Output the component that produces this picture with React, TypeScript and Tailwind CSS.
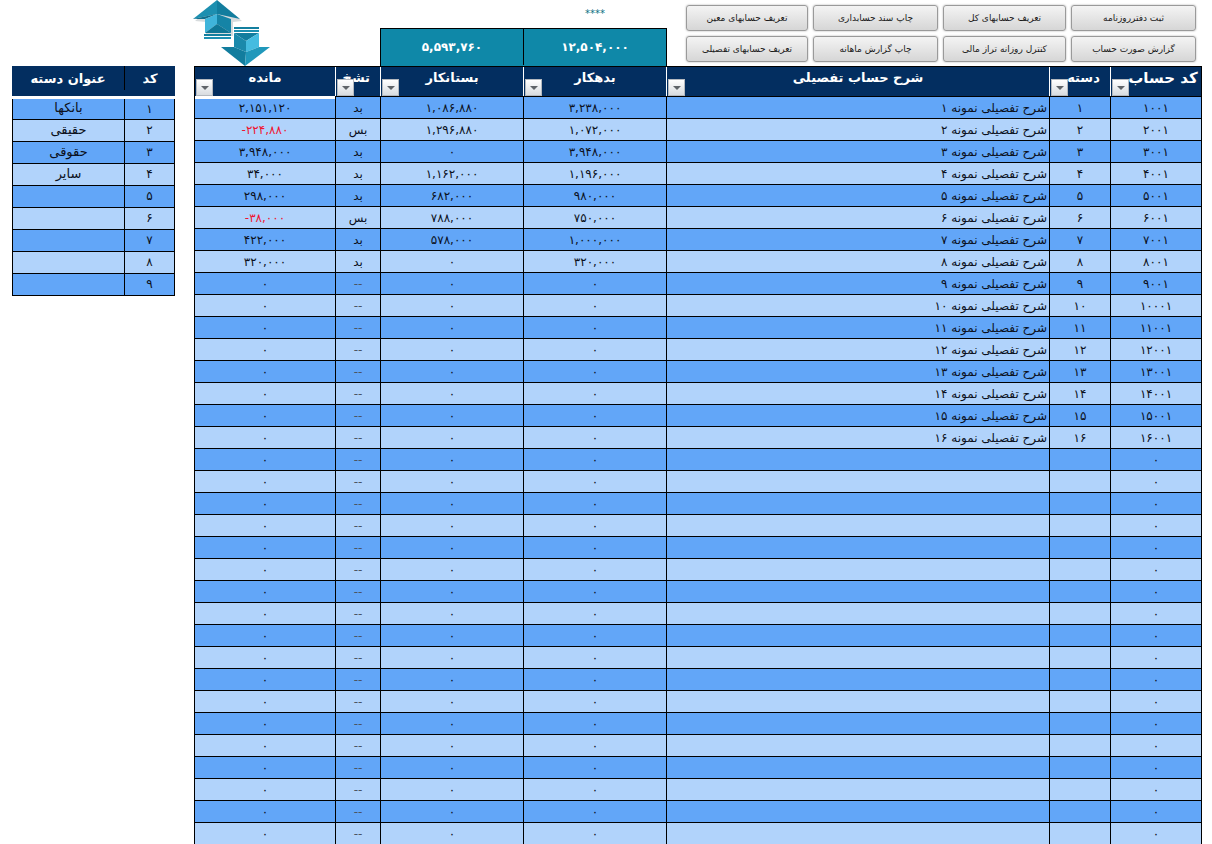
const toFa = (s: string) => s.replace(/\d/g, (d) => '۰۱۲۳۴۵۶۷۸۹'[Number(d)]);

const cols = ['w-[141px]', 'w-[45px]', 'w-[143px]', 'w-[143px]', 'w-[383px]', 'w-[61px]', 'w-[91px]'];

const titles = ['مانده', 'تشخ', 'بستانکار', 'بدهکار', 'شرح حساب تفصیلی', 'دسته', 'کد حساب'];

// each header label sits a little off centre in the sheet
const titleClass = ['', 'absolute right-[10px]', '', '', '', 'pl-[7px]', 'pl-[14px] text-[15px]'];

const filled = [
  ['3,238,000', '1,086,880', 'بد', '2,151,120'],
  ['1,072,000', '1,296,880', 'بس', '-224,880'],
  ['3,948,000', '0', 'بد', '3,948,000'],
  ['1,196,000', '1,162,000', 'بد', '34,000'],
  ['980,000', '682,000', 'بد', '298,000'],
  ['750,000', '788,000', 'بس', '-38,000'],
  ['1,000,000', '578,000', 'بد', '422,000'],
  ['320,000', '0', 'بد', '320,000'],
];

const groups = ['بانکها', 'حقیقی', 'حقوقی', 'سایر', '', '', '', '', ''];

const topButtons = [
  ['تعریف حسابهای معین', 'چاپ سند حسابداری', 'تعریف حسابهای کل', 'ثبت دفترروزنامه'],
  ['تعریف حسابهای تفصیلی', 'چاپ گزارش ماهانه', 'کنترل روزانه تراز مالی', 'گزارش صورت حساب'],
];

function Arrows() {
  return (
    <svg width="80" height="66" viewBox="0 0 80 66" className="block">
      <polygon points="3,21 26,2 50,21 41,22 41,36 14,36 14,22" fill="#9aa5ab" opacity="0.4" />
      <polygon points="1,19 25,0 25,14" fill="#1c8fb0" />
      <polygon points="25,0 48,19 25,14" fill="#127d9e" />
      <polygon points="1,19 25,14 13,19" fill="#0f6f8e" />
      <polygon points="13,19 25,14 25,24 13,33" fill="#3fb4da" />
      <polygon points="25,14 39,19 39,33 25,24" fill="#1584a6" />
      <polygon points="13,33 25,24 39,33" fill="#0f7796" />
      <rect x="12" y="34" width="27" height="2" fill="#137f9f" />
      <rect x="12" y="37" width="27" height="2" fill="#1c90b2" />
      <rect x="42" y="27" width="25" height="2" fill="#137f9f" />
      <rect x="42" y="30" width="25" height="2" fill="#1c90b2" />
      <polygon points="42,33 67,33 54,41" fill="#127d9e" />
      <polygon points="42,33 54,41 54,52 42,47" fill="#1a89ab" />
      <polygon points="67,33 67,47 54,52 54,41" fill="#45bce0" />
      <polygon points="29,47 42,47 54,52 53,66" fill="#127d9e" />
      <polygon points="67,47 78,47 53,66 54,52" fill="#2098bb" />
    </svg>
  );
}

function FilterButton() {
  return (
    <span className="absolute left-px bottom-0 flex h-[17px] w-[17px] items-center justify-center border border-[#b4b9bf] bg-gradient-to-b from-white to-[#d8dce0]">
      <span className="h-0 w-0 border-x-[4px] border-t-[4px] border-x-transparent border-t-[#5f6469]" />
    </span>
  );
}

function Cell({ className, children }: { className: string; children?: React.ReactNode }) {
  return (
    <div className={`flex shrink-0 items-center justify-center border-r border-black ${className}`}>{children}</div>
  );
}

function MainRow({ index }: { index: number }) {
  const n = index + 1;
  const data = filled[index];
  const hasAccount = index < 16;
  const negative = data ? data[3].startsWith('-') : false;
  return (
    <div className={`flex h-[22px] border-b border-l border-black ${index % 2 === 0 ? 'bg-[#62a6f8]' : 'bg-[#b1d3fb]'}`}>
      <Cell className={cols[0]}>
        <span dir="ltr" className={negative ? 'text-[#f0142f]' : ''}>{data ? toFa(data[3]) : '۰'}</span>
      </Cell>
      <Cell className={cols[1]}>
        {data ? data[2] : <span className="text-[#4b5563]">--</span>}
      </Cell>
      <Cell className={cols[2]}><span dir="ltr">{data ? toFa(data[1]) : '۰'}</span></Cell>
      <Cell className={cols[3]}><span dir="ltr">{data ? toFa(data[0]) : '۰'}</span></Cell>
      <Cell className={`${cols[4]} justify-end pr-[2px]`}>
        {hasAccount && <span dir="rtl">شرح تفصیلی نمونه {toFa(String(n))}</span>}
      </Cell>
      <Cell className={cols[5]}>{hasAccount ? toFa(String(n)) : ''}</Cell>
      <Cell className={cols[6]}>{hasAccount ? toFa(`${n}001`) : '۰'}</Cell>
    </div>
  );
}

export default function App() {
  return (
    <div className="h-[844px] w-[1212px] overflow-hidden bg-white text-[12px] leading-none text-[#0b1020] font-['DejaVu_Sans',sans-serif]">
      <div className="flex h-[66px]">
        <div className="ml-[192px] w-[188px]">
          <Arrows />
        </div>
        <div className="flex w-[287px] flex-col">
          <div className="flex h-[28px] items-center justify-center pl-[143px] text-[10px] text-[#0b6f7f]">****</div>
          <div className="flex h-[38px] border-x border-t border-black bg-[#0f88a8] pb-px text-[12px] font-bold text-white">
            <div className="flex w-[143px] items-center justify-center border-r border-black">{toFa('5,593,760')}</div>
            <div className="flex flex-1 items-center justify-center">{toFa('12,504,000')}</div>
          </div>
        </div>
        <div className="ml-[19px] flex flex-col gap-[5px] pt-[5px]">
          {topButtons.map((row, i) => (
            <div key={i} className="grid grid-cols-[122px_125px_123px_125px] gap-[5px]">
              {row.map((label) => (
                <button
                  key={label}
                  dir="rtl"
                  className="h-[26px] truncate rounded-[3px] border border-[#9a9a9a] bg-gradient-to-b from-[#f4f4f4] to-[#d6d6d6] text-[9px] text-[#1a1a1a] shadow-[0_0_2px_rgba(0,0,0,0.35)]"
                >
                  {label}
                </button>
              ))}
            </div>
          ))}
        </div>
      </div>

      <div className="flex items-start pl-[12px]">
        <div className="w-[163px] shrink-0">
          <div className="flex h-[30px] bg-[#032e60] pb-[6px] text-[13px] font-bold text-white">
            <div className="flex w-[113px] items-center justify-center border-r border-black">عنوان دسته</div>
            <div className="flex flex-1 items-center justify-center">کد</div>
          </div>
          <div className="mt-[3px]">
            {groups.map((title, i) => (
              <div
                key={i}
                className={`flex h-[22px] border-x border-b border-black first:h-[21px] ${i % 2 === 0 ? 'bg-[#62a6f8]' : 'bg-[#b1d3fb]'}`}
              >
                <div className="flex w-[112px] items-center justify-center border-r border-black pb-[3px] text-[13px]">{title}</div>
                <div className="flex flex-1 items-center justify-center pb-px">{toFa(String(i + 1))}</div>
              </div>
            ))}
          </div>
        </div>

        <div className="ml-[19px] w-[1008px] shrink-0">
          <div className="flex h-[31px] border-y border-l border-black bg-[#032e60] text-[13px] font-bold text-white">
            {titles.map((title, i) => (
              <div
                key={title}
                className={`relative flex shrink-0 justify-center border-r pt-[4px] ${i === 6 ? 'border-black' : 'border-white'} ${cols[i]}`}
              >
                <span className={titleClass[i]}>{title}</span>
                <FilterButton />
                {i === 0 && <span className="absolute -bottom-[3px] left-0 right-0 h-[3px] bg-white" />}
              </div>
            ))}
          </div>
          {Array.from({ length: 34 }, (_, i) => (
            <MainRow key={i} index={i} />
          ))}
        </div>
      </div>
    </div>
  );
}
